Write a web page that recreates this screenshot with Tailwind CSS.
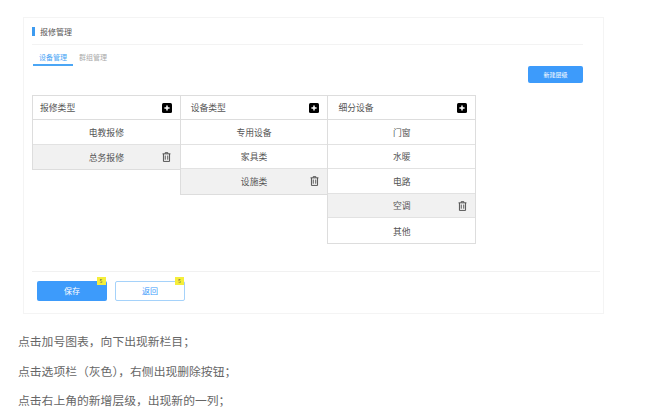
<!DOCTYPE html>
<html lang="zh-CN">
<head>
    <meta charset="UTF-8">
    <title>报修管理</title>
    <script src="https://cdn.jsdelivr.net/npm/@tailwindcss/browser@4"></script>
</head>
<body class="bg-white font-['Noto_Sans_CJK_SC','Noto_Sans',sans-serif]">
<svg class="hidden">
    <symbol id="plus" viewBox="0 0 10 10"><rect width="10" height="10" rx="1.5" fill="#000"/><path d="M5 2.4v5.2M2.4 5h5.2" stroke="#fff" stroke-width="1.5"/></symbol>
    <symbol id="trash" viewBox="0 0 10 11"><path d="M3.5 1.8V.7h3v1.1M.6 2h8.8M1.6 2v8.4h6.8V2M3.6 3.9v4.6M6.4 3.9v4.6" fill="none" stroke="#444" stroke-width="1"/></symbol>
</svg>
<div class="w-[660px] h-[416px] overflow-hidden pt-[17px]">
    <!-- Card -->
    <div class="ml-[23px] w-[581px] h-[297px] border border-[#f4f4f4] px-[8px]">
        <div class="h-[27px] border-b border-[#f3f3f3] flex items-center w-[551px] pt-[1px]">
            <span class="w-[3px] h-[9px] bg-[#3d9bf0] mr-[5px]"></span>
            <span class="text-[8px] text-[#555] leading-none">报修管理</span>
        </div>

        <!-- Tabs -->
        <div class="flex justify-between items-start w-[551px] h-[50px]">
            <div class="flex mt-[7px]">
                <div class="w-[40px] h-[14px] border-b-2 border-[#4ba6f5] text-center text-[7px] leading-[11px] text-[#4ba6f5] ml-[1px]">设备管理</div>
                <div class="ml-[6px] text-[7px] leading-[11px] text-[#aaa]">群组管理</div>
            </div>
            <button class="mt-[21px] w-[55px] h-[17px] rounded-[2px] bg-[#3d9bfb] text-white text-[6px] leading-none">新建层级</button>
        </div>

        <!-- Columns -->
        <div class="flex items-start h-[176px] text-[8.8px] text-[#555]">
            <div class="w-[148.7px] border border-[#ddd]">
                <div class="h-[24px] border-b border-[#ddd] flex items-center justify-between pl-[7px] pr-[8px]">
                    <span>报修类型</span>
                    <svg class="w-[10px] h-[10px]"><use href="#plus"/></svg>
                </div>
                <div class="h-[24.6px] pt-px border-b border-[#e2e2e2] flex items-center justify-center">电教报修</div>
                <div class="relative h-[24.6px] pt-px bg-[#f1f1f1] flex items-center justify-center">总务报修
                    <svg class="absolute right-[8.5px] top-[7px] w-[9px] h-[10px]"><use href="#trash"/></svg>
                </div>
            </div>
            <div class="w-[148.7px] -ml-px border border-[#ddd]">
                <div class="h-[24px] border-b border-[#ddd] flex items-center justify-between pl-[10px] pr-[8px]">
                    <span>设备类型</span>
                    <svg class="w-[10px] h-[10px]"><use href="#plus"/></svg>
                </div>
                <div class="h-[24.6px] pt-px border-b border-[#e2e2e2] flex items-center justify-center">专用设备</div>
                <div class="h-[24.6px] pt-px border-b border-[#e2e2e2] flex items-center justify-center">家具类</div>
                <div class="relative h-[24.6px] pt-px bg-[#f1f1f1] flex items-center justify-center">设施类
                    <svg class="absolute right-[8.5px] top-[7px] w-[9px] h-[10px]"><use href="#trash"/></svg>
                </div>
            </div>
            <div class="w-[148.7px] -ml-px border border-[#ddd]">
                <div class="h-[24px] border-b border-[#ddd] flex items-center justify-between pl-[10px] pr-[8px]">
                    <span>细分设备</span>
                    <svg class="w-[10px] h-[10px]"><use href="#plus"/></svg>
                </div>
                <div class="h-[24.6px] pt-px border-b border-[#e2e2e2] flex items-center justify-center">门窗</div>
                <div class="h-[24.6px] pt-px border-b border-[#e2e2e2] flex items-center justify-center">水暖</div>
                <div class="h-[24.6px] pt-px border-b border-[#e2e2e2] flex items-center justify-center">电路</div>
                <div class="relative h-[24.6px] pt-px bg-[#f1f1f1] border-b border-[#e2e2e2] flex items-center justify-center">空调
                    <svg class="absolute right-[8.5px] top-[7px] w-[9px] h-[10px]"><use href="#trash"/></svg>
                </div>
                <div class="h-[24.6px] pt-px flex items-center justify-center">其他</div>
            </div>
        </div>

        <!-- Footer -->
        <div class="border-t border-[#f1f1f1] w-[568px] flex gap-[8px] pt-[9px] pl-[5px]">
            <button class="relative w-[70px] h-[20px] rounded-[2px] bg-[#3d9bfb] text-white text-[8px]">保存
                <span class="absolute -top-[4px] right-[1.5px] w-[9px] h-[8px] bg-[#f5ee3a] text-[#555] text-[5px] leading-[8px]">5</span>
            </button>
            <button class="relative w-[70px] h-[20px] rounded-[2px] bg-white border-[1.5px] border-[#a5d2fa] text-[#3d9bfb] text-[8px]">返回
                <span class="absolute -top-[5px] right-[0px] w-[9px] h-[8px] bg-[#f5ee3a] text-[#555] text-[5px] leading-[8px]">5</span>
            </button>
        </div>
    </div>

    <!-- Notes -->
    <div class="ml-[18px] mt-[18px] text-[11.8px] leading-[17px] text-[#666] flex flex-col gap-[12.5px]">
        <p>点击加号图表，向下出现新栏目；</p>
        <p>点击选项栏（灰色），右侧出现删除按钮；</p>
        <p>点击右上角的新增层级，出现新的一列；</p>
    </div>
</div>
</body>
</html>
